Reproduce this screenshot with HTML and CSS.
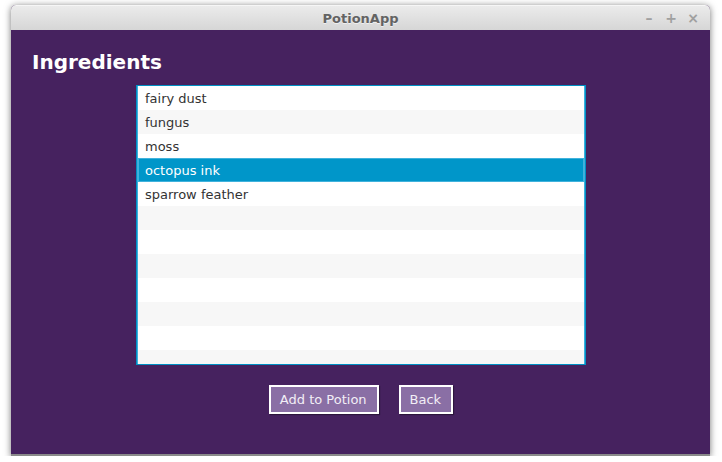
FILE: index.html
```html
<!DOCTYPE html>
<html>
<head>
<meta charset="utf-8">
<link rel="stylesheet" href="styles.css">
</head>
<body>
<div class="window">
  <div class="titlebar">
    <span class="title">PotionApp</span>
    <div class="controls">
      <span class="ctl">&#8211;</span>
      <span class="ctl">+</span>
      <span class="ctl">&#215;</span>
    </div>
  </div>
  <div class="content">
    <h1 class="heading">Ingredients</h1>
    <ul class="list">
      <li class="row">fairy dust</li>
      <li class="row">fungus</li>
      <li class="row">moss</li>
      <li class="row selected">octopus ink</li>
      <li class="row">sparrow feather</li>
      <li class="row"></li>
      <li class="row"></li>
      <li class="row"></li>
      <li class="row"></li>
      <li class="row"></li>
      <li class="row"></li>
      <li class="row"></li>
    </ul>
    <div class="actions">
      <button class="btn">Add to Potion</button>
      <button class="btn">Back</button>
    </div>
  </div>
</div>
</body>
</html>
```

FILE: styles.css
```css
html, body {
  margin: 0;
  padding: 0;
  background: #ffffff;
  font-family: "DejaVu Sans", sans-serif;
}

.window {
  margin: 5px 0 0 11px;
  width: 699px;
  height: 451px;
  border-radius: 5px 5px 0 0;
  box-shadow: 0 1px 7px rgba(0, 0, 0, 0.55);
  display: flex;
  flex-direction: column;
  overflow: hidden;
  background: #46225f;
  border-bottom: 2px solid #8a8a8a;
  box-sizing: border-box;
}

.titlebar {
  height: 25px;
  flex: none;
  background: linear-gradient(#ebebeb, #d6d6d6);
  position: relative;
  display: flex;
  align-items: center;
  justify-content: center;
  border-top: 1px solid #f6f6f6;
  box-sizing: border-box;
}

.title {
  font-weight: bold;
  font-size: 13px;
  color: #636363;
  text-shadow: 0 1px 0 rgba(255, 255, 255, 0.6);
}

.controls {
  position: absolute;
  right: 11px;
  top: 3px;
  display: flex;
  gap: 10px;
}

.ctl {
  font-size: 14px;
  font-weight: bold;
  color: #a0a0a0;
  width: 12px;
  text-align: center;
  line-height: 18px;
}

.content {
  flex: 1;
  padding: 20px 22px 0 21px;
  display: flex;
  flex-direction: column;
}

.heading {
  margin: 0;
  font-size: 20px;
  line-height: 24px;
  font-weight: bold;
  color: #ffffff;
}

.list {
  list-style: none;
  margin: 11px auto 0;
  padding: 0 1px;
  width: 450px;
  height: 280px;
  box-sizing: border-box;
  border: 1px solid #0090c4;
  box-shadow: inset 0 0 0 1px #3db0dc;
  background: #ffffff;
  overflow: hidden;
  position: relative;
  left: 1px;
}

.row {
  height: 24px;
  padding-top: 2px;
  line-height: 22px;
  font-size: 13px;
  color: #333333;
  padding-left: 7px;
  background: #ffffff;
  box-sizing: border-box;
}

.row:nth-child(even) {
  background: #f7f7f7;
}

.row.selected {
  background: #0096c9;
  color: #ffffff;
  box-shadow: inset 0 0 0 1px #40b2dc;
}

.actions {
  display: flex;
  justify-content: center;
  gap: 20px;
  margin-top: 20px;
  position: relative;
  left: 1px;
}

.btn {
  height: 29px;
  padding: 0 10px 0 9px;
  background: #8a6fa5;
  border: 2px solid #ffffff;
  color: #f2eef6;
  font-family: "DejaVu Sans", sans-serif;
  font-size: 13px;
  box-shadow: 1px 1px 1px rgba(0, 0, 0, 0.35);
  cursor: pointer;
}
```
